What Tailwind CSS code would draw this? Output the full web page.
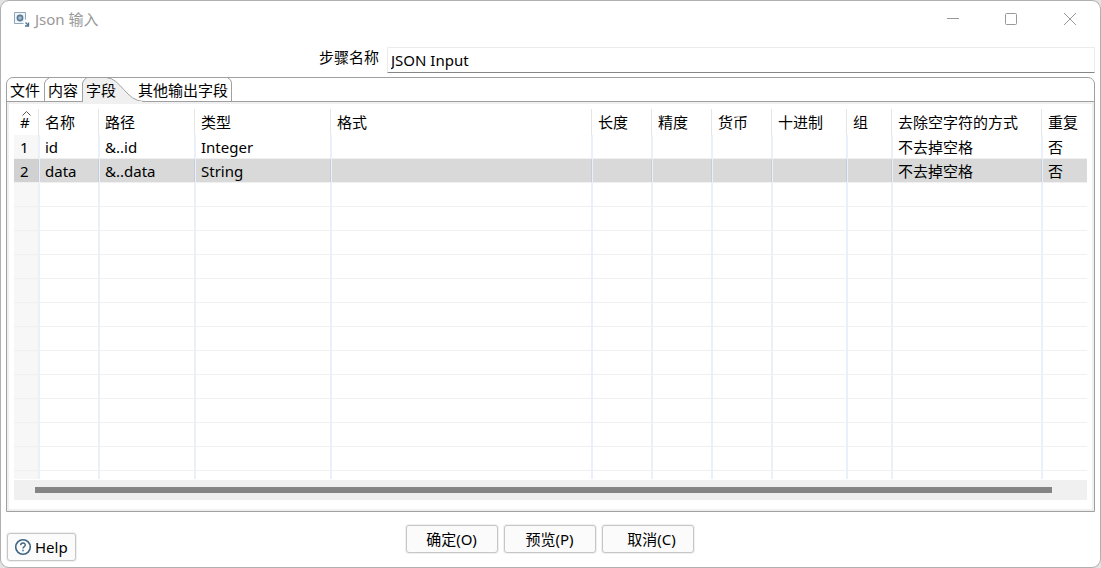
<!DOCTYPE html>
<html lang="zh-CN">
<head>
<meta charset="utf-8">
<title>Json 输入</title>
<script src="https://cdn.jsdelivr.net/npm/@tailwindcss/browser@4"></script>
</head>
<body class="bg-[#e3e3e3] text-[15px] leading-6 text-black font-['Noto_Sans','Noto_Sans_CJK_SC',sans-serif]">
<div class="flex h-screen flex-col overflow-hidden rounded-[9px] border border-[#b0b0b0] bg-white">
  <header class="flex h-9 shrink-0 items-center pl-3 text-[#999999]">
    <svg class="mr-1 size-[18px]" viewBox="0 0 18 18" fill="none" aria-hidden="true">
      <path d="M12.500 9.500V2.500H1.500V13.500H10.500" fill="#f1f5f8" stroke="#8fa7b8"/>
      <circle cx="7" cy="8" r="3.200" fill="#a9bdcc"/>
      <circle cx="7" cy="8" r="2.600" stroke="#5b7c96" stroke-width="1.600"/>
      <path d="M12.500 12.500L15.500 15.500M15.500 12.500V16H12" stroke="#4f7590" stroke-width="1.300"/>
    </svg>
    <h1 class="flex-1">Json 输入</h1>
    <button type="button" aria-label="最小化" class="flex h-9 w-[58px] items-center justify-center"><svg class="size-3" viewBox="0 0 12 12" stroke="#999"><path d="M0 5.500H12"/></svg></button>
    <button type="button" aria-label="最大化" class="flex h-9 w-[58px] items-center justify-center"><svg class="size-3" viewBox="0 0 12 12" fill="none" stroke="#999"><rect x=".5" y=".5" width="11" height="11" rx="1"/></svg></button>
    <button type="button" aria-label="关闭" class="flex h-9 w-[60px] items-center justify-center"><svg class="size-3" viewBox="0 0 12 12" stroke="#999"><path d="M0 0L12 12M12 0L0 12"/></svg></button>
  </header>
  <div class="mt-[10px] flex shrink-0 pr-[5px]">
    <label for="step" class="w-[386px] pr-2 text-right leading-5">步骤名称</label>
    <input id="step" type="text" value="JSON Input" class="h-[26px] min-w-0 flex-1 rounded-[1px] border border-[#ececec] border-b-[#868686] bg-white pl-[3px] outline-none">
  </div>
  <main class="mx-[5px] mt-1 flex min-h-0 flex-1 flex-col overflow-hidden rounded-t-[7px] border border-[#a0a0a0]">
    <div role="tablist" class="relative flex h-6 shrink-0 border-b border-[#a0a0a0]">
      <svg class="absolute left-0 top-0 h-6 w-[226px]" viewBox="0 0 226 24" fill="none" stroke="#a0a0a0" aria-hidden="true">
        <path d="M37.500 24V5Q38.500 1.500 42 0"/>
        <path d="M75.500 24V5Q76.500 1.500 80 -.5H99C114 0 119 23.500 137 23.500V25H75.500" fill="#f0f0f0"/>
        <path d="M76 23.500H135" stroke="#f0f0f0"/>
        <path d="M221 0Q224.500 1.500 224.500 5V23"/>
      </svg>
      <button type="button" role="tab" class="relative w-[38px] pl-[3px] text-left">文件</button>
      <button type="button" role="tab" class="relative w-[38px] pl-[3px] text-left">内容</button>
      <button type="button" role="tab" aria-selected="true" class="relative w-[52px] pl-[3px] text-left">字段</button>
      <button type="button" role="tab" class="relative w-24 pl-[3px] text-left">其他输出字段</button>
    </div>
    <section class="flex min-h-0 flex-1 flex-col border-2 border-[#f0f0f0] px-[5px] pb-[9px] pt-[5px]">
      <div class="mb-px min-h-0 flex-1 overflow-hidden">
        <table class="w-full table-fixed border-separate border-spacing-0 text-left whitespace-nowrap [&_td]:h-6 [&_td]:border-b [&_td]:border-b-[#f0f0f0] [&_td]:border-r-2 [&_td]:border-r-[#e9f0fa] [&_td]:p-0 [&_td]:pl-[5px] [&_td]:pt-[2px] [&_td]:leading-[21px] [&_td:first-child]:bg-[#f7f7f7] [&_td:first-child]:pl-[6px] [&_td:last-child]:border-r-0 [&_th]:h-[26px] [&_th]:bg-[linear-gradient(#e5e5e5,#e5e5e5)] [&_th]:bg-[length:1px_26px] [&_th]:bg-[position:right_1px_top] [&_th]:bg-no-repeat [&_th]:p-0 [&_th]:pl-[5px] [&_th]:font-normal [&_th]:leading-[26px] [&_th:first-child]:pl-[6px] [&_th:last-child]:bg-none">
          <colgroup><col class="w-[26px]"><col class="w-[60px]"><col class="w-24"><col class="w-[136px]"><col><col class="w-[60px]"><col class="w-[60px]"><col class="w-[60px]"><col class="w-[75px]"><col class="w-[45px]"><col class="w-[150px]"><col class="w-[44px]"></colgroup>
          <thead><tr><th class="relative"><svg class="absolute left-2 top-[2px] h-[5px] w-[9px]" viewBox="0 0 9 5" fill="none" stroke="#555" aria-hidden="true"><path d="M.5 4.500L4.500 .5L8.500 4.500"/></svg>#</th><th>名称</th><th>路径</th><th>类型</th><th>格式</th><th>长度</th><th>精度</th><th>货币</th><th>十进制</th><th>组</th><th>去除空字符的方式</th><th>重复</th></tr></thead>
          <tbody>
            <tr><td>1</td><td>id</td><td>&amp;..id</td><td>Integer</td><td></td><td></td><td></td><td></td><td></td><td></td><td>不去掉空格</td><td>否</td></tr>
            <tr class="bg-[#d9d9d9] [&>td]:border-r! [&>td]:shadow-[inset_-1px_0_#c5cdd8] [&>td:first-child]:bg-[#d1d1d1] [&>td:last-child]:border-r-0! [&>td:last-child]:shadow-none"><td>2</td><td>data</td><td>&amp;..data</td><td>String</td><td></td><td></td><td></td><td></td><td></td><td></td><td>不去掉空格</td><td>否</td></tr>
            <tr><td></td><td></td><td></td><td></td><td></td><td></td><td></td><td></td><td></td><td></td><td></td><td></td></tr>
            <tr><td></td><td></td><td></td><td></td><td></td><td></td><td></td><td></td><td></td><td></td><td></td><td></td></tr>
            <tr><td></td><td></td><td></td><td></td><td></td><td></td><td></td><td></td><td></td><td></td><td></td><td></td></tr>
            <tr><td></td><td></td><td></td><td></td><td></td><td></td><td></td><td></td><td></td><td></td><td></td><td></td></tr>
            <tr><td></td><td></td><td></td><td></td><td></td><td></td><td></td><td></td><td></td><td></td><td></td><td></td></tr>
            <tr><td></td><td></td><td></td><td></td><td></td><td></td><td></td><td></td><td></td><td></td><td></td><td></td></tr>
            <tr><td></td><td></td><td></td><td></td><td></td><td></td><td></td><td></td><td></td><td></td><td></td><td></td></tr>
            <tr><td></td><td></td><td></td><td></td><td></td><td></td><td></td><td></td><td></td><td></td><td></td><td></td></tr>
            <tr><td></td><td></td><td></td><td></td><td></td><td></td><td></td><td></td><td></td><td></td><td></td><td></td></tr>
            <tr><td></td><td></td><td></td><td></td><td></td><td></td><td></td><td></td><td></td><td></td><td></td><td></td></tr>
            <tr><td></td><td></td><td></td><td></td><td></td><td></td><td></td><td></td><td></td><td></td><td></td><td></td></tr>
            <tr><td></td><td></td><td></td><td></td><td></td><td></td><td></td><td></td><td></td><td></td><td></td><td></td></tr>
            <tr><td></td><td></td><td></td><td></td><td></td><td></td><td></td><td></td><td></td><td></td><td></td><td></td></tr>
          </tbody>
        </table>
      </div>
      <div class="flex h-5 shrink-0 items-center bg-[#f0f0f0] pl-[21px] pr-[35px]"><div class="h-[6px] flex-1 bg-[#858585]"></div></div>
    </section>
  </main>
  <footer class="grid h-[55px] shrink-0 grid-cols-[1fr_auto_1fr] items-start pl-[6px] pr-2 pt-[13px]">
    <button type="button" class="mt-2 flex h-7 w-[69px] items-center rounded-[3px] border border-[#c6c6c6] bg-[#fbfbfb] pl-[6px] ring-1 ring-[#f0f0f0]">
      <svg class="mr-[3px] size-[18px]" viewBox="0 0 18 18" fill="none" stroke="#3f6583" stroke-width="1.600" aria-hidden="true">
        <circle cx="9" cy="9" r="7.300"/>
        <path d="M6.700 7.200C6.700 4.300 11.300 4.300 11.300 7.100C11.300 8.700 9 8.700 9 10.600M9 11.800V13.300" stroke-width="1.400"/>
      </svg>Help</button>
    <div class="flex gap-[6px]">
      <button type="button" class="h-7 w-[92px] rounded-[3px] border border-[#c6c6c6] bg-[#fbfbfb] ring-1 ring-[#f0f0f0]">确定(O)</button>
      <button type="button" class="h-7 w-[92px] rounded-[3px] border border-[#c6c6c6] bg-[#fbfbfb] ring-1 ring-[#f0f0f0]">预览(P)</button>
      <button type="button" class="h-7 w-[92px] rounded-[3px] border border-[#c6c6c6] bg-[#fbfbfb] pl-2 ring-1 ring-[#f0f0f0]">取消(C)</button>
    </div>
  </footer>
</div>
</body>
</html>
